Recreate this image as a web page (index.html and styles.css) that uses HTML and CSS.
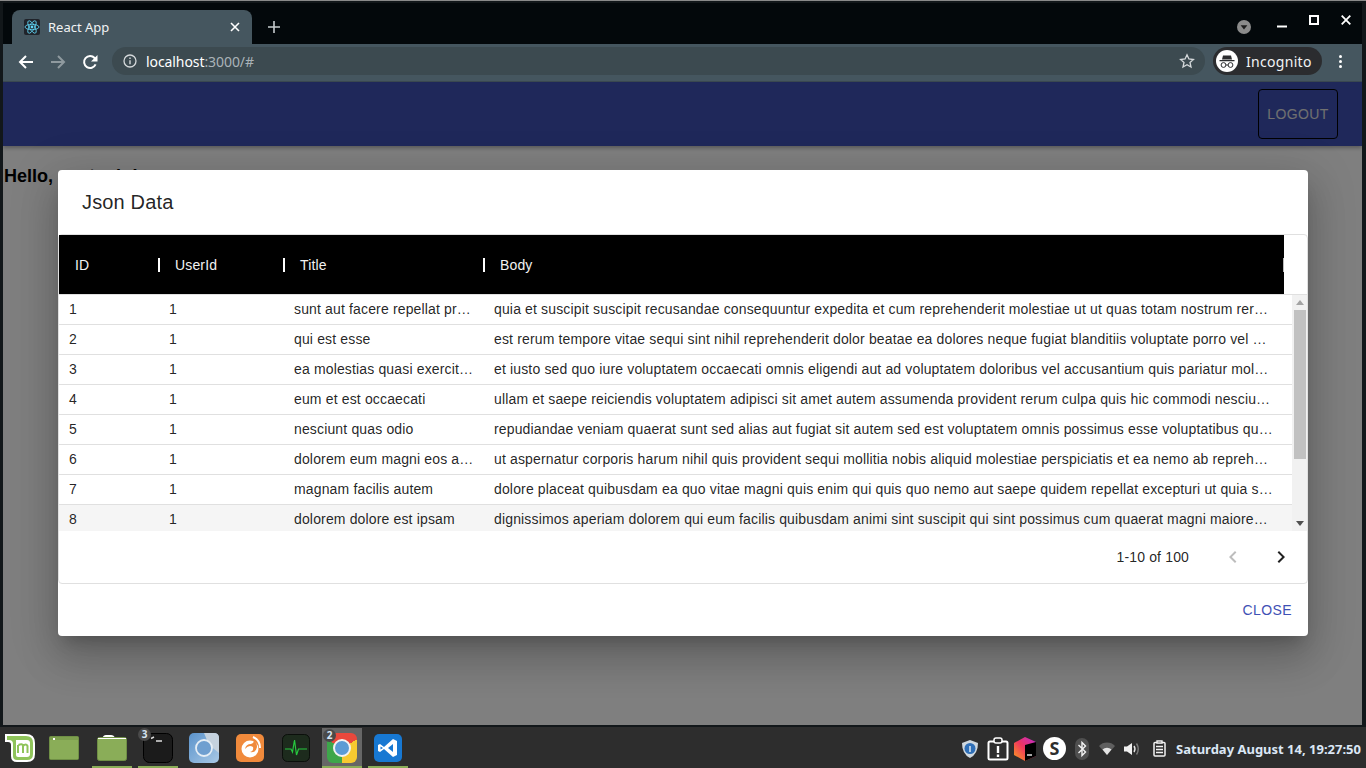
FILE: index.html
```html
<!DOCTYPE html>
<html lang="en">
<head>
    <meta charset="UTF-8">
    <title>React App</title>
    <link rel="stylesheet" href="styles.css">
</head>
<body>
    <div class="window">
        <!-- tab strip -->
        <div class="tabstrip">
            <div class="tab">
                <svg class="favicon" width="16" height="16" viewBox="0 0 16 16">
                    <rect width="16" height="16" rx="2" fill="#20232a"/>
                    <g fill="none" stroke="#61dafb" stroke-width="0.8">
                        <ellipse cx="8" cy="8" rx="7" ry="2.7"/>
                        <ellipse cx="8" cy="8" rx="7" ry="2.7" transform="rotate(60 8 8)"/>
                        <ellipse cx="8" cy="8" rx="7" ry="2.7" transform="rotate(120 8 8)"/>
                    </g>
                    <circle cx="8" cy="8" r="1.4" fill="#61dafb"/>
                </svg>
                <span class="tab-title">React App</span>
                <svg class="tab-close" width="10" height="10" viewBox="0 0 10 10"><path d="M1 1l8 8M9 1l-8 8" stroke="#fff" stroke-width="1.6"/></svg>
            </div>
            <svg class="new-tab" width="12" height="12" viewBox="0 0 12 12"><path d="M6 0v12M0 6h12" stroke="#c6cbce" stroke-width="1.6"/></svg>
            <div class="win-controls">
                <svg class="tab-search" width="14" height="14" viewBox="0 0 14 14"><circle cx="7" cy="7" r="7" fill="#8b8b8b"/><path d="M3.6 5.2h6.8L7 9.6z" fill="#1c1c1c"/></svg>
                <svg class="win-min" width="10" height="10" viewBox="0 0 10 10"><path d="M0 8.5h10" stroke="#fff" stroke-width="2"/></svg>
                <svg class="win-max" width="10" height="10" viewBox="0 0 10 10"><rect x="1" y="1" width="8" height="8" fill="none" stroke="#fff" stroke-width="2"/></svg>
                <svg class="win-close" width="10" height="10" viewBox="0 0 10 10"><path d="M.7.7l8.6 8.6M9.3.7L.7 9.3" stroke="#fff" stroke-width="1.8"/></svg>
            </div>
        </div>

        <!-- address bar -->
        <div class="toolbar">
            <svg class="nav-btn" width="16" height="16" viewBox="0 0 16 16"><path d="M15 8H2M8 2L2 8l6 6" fill="none" stroke="#fff" stroke-width="2"/></svg>
            <svg class="nav-btn" width="16" height="16" viewBox="0 0 16 16"><path d="M1 8h13M8 2l6 6-6 6" fill="none" stroke="#8f9a9f" stroke-width="2"/></svg>
            <svg class="nav-btn" width="16" height="16" viewBox="0 0 16 16"><path d="M13.6 10.4A6 6 0 1 1 12.6 4L14.500 6" fill="none" stroke="#fff" stroke-width="2"/><path d="M15.500 1v6.500H9z" fill="#fff"/></svg>
            <div class="omnibox">
                <svg width="14" height="14" viewBox="0 0 14 14"><circle cx="7" cy="7" r="6" fill="none" stroke="#d5d9db" stroke-width="1.300"/><path d="M7 6.200v4M7 3.600v1.400" stroke="#d5d9db" stroke-width="1.400"/></svg>
                <span class="url"><span class="url-host">localhost</span>:3000/#</span>
                <svg class="star" width="16" height="16" viewBox="0 0 16 16"><path d="M8 1.800l1.900 4.200 4.500.5-3.400 3 1 4.500L8 11.700 4 14l1-4.500-3.400-3 4.500-.5z" fill="none" stroke="#d5d9db" stroke-width="1.300"/></svg>
            </div>
            <div class="incognito">
                <svg width="22" height="22" viewBox="0 0 22 22">
                    <circle cx="11" cy="11" r="11" fill="#fff"/>
                    <path d="M7 5.500h8l1 4H6zM3.500 10h15v1.200h-15z" fill="#2b2c2f"/>
                    <g fill="none" stroke="#2b2c2f" stroke-width="1"><circle cx="7.500" cy="15" r="2.400"/><circle cx="14.500" cy="15" r="2.400"/><path d="M10 15h2"/></g>
                </svg>
                <span>Incognito</span>
            </div>
            <div class="menu-dots"><i></i><i></i><i></i></div>
        </div>

        <!-- the page itself -->
        <div class="page">
            <header class="appbar">
                <button class="logout">LOGOUT</button>
            </header>
            <p class="hello">Hello, santosh !</p>

            <div class="backdrop"></div>

            <div class="dialog">
                <h2 class="dialog-title">Json Data</h2>
                <div class="grid">
                    <div class="grid-head">
                        <div class="head-cols">
                            <div class="head-cell col-id">ID</div>
                            <div class="head-cell col-user">UserId</div>
                            <div class="head-cell col-title">Title</div>
                            <div class="head-cell col-body">Body</div>
                        </div>
                    </div>
                    <div class="grid-main">
                        <div class="rows">
                            <div class="row">
                                <div class="cell col-id">1</div><div class="cell col-user">1</div>
                                <div class="cell col-title">sunt aut facere repellat provident occaecati excepturi optio reprehenderit</div>
                                <div class="cell col-body">quia et suscipit suscipit recusandae consequuntur expedita et cum reprehenderit molestiae ut ut quas totam nostrum rerum est autem sunt rem eveniet architecto</div>
                            </div>
                            <div class="row">
                                <div class="cell col-id">2</div><div class="cell col-user">1</div>
                                <div class="cell col-title">qui est esse</div>
                                <div class="cell col-body">est rerum tempore vitae sequi sint nihil reprehenderit dolor beatae ea dolores neque fugiat blanditiis voluptate porro vel nihil molestiae ut reiciendis qui aperiam non debitis possimus qui neque nisi nulla</div>
                            </div>
                            <div class="row">
                                <div class="cell col-id">3</div><div class="cell col-user">1</div>
                                <div class="cell col-title">ea molestias quasi exercitationem repellat qui ipsa sit aut</div>
                                <div class="cell col-body">et iusto sed quo iure voluptatem occaecati omnis eligendi aut ad voluptatem doloribus vel accusantium quis pariatur molestiae porro eius odio et labore et velit aut</div>
                            </div>
                            <div class="row">
                                <div class="cell col-id">4</div><div class="cell col-user">1</div>
                                <div class="cell col-title">eum et est occaecati</div>
                                <div class="cell col-body">ullam et saepe reiciendis voluptatem adipisci sit amet autem assumenda provident rerum culpa quis hic commodi nesciunt rem tenetur doloremque ipsam iure quis sunt voluptatem rerum illo velit</div>
                            </div>
                            <div class="row">
                                <div class="cell col-id">5</div><div class="cell col-user">1</div>
                                <div class="cell col-title">nesciunt quas odio</div>
                                <div class="cell col-body">repudiandae veniam quaerat sunt sed alias aut fugiat sit autem sed est voluptatem omnis possimus esse voluptatibus quis est aut tenetur dolor neque</div>
                            </div>
                            <div class="row">
                                <div class="cell col-id">6</div><div class="cell col-user">1</div>
                                <div class="cell col-title">dolorem eum magni eos aperiam quia</div>
                                <div class="cell col-body">ut aspernatur corporis harum nihil quis provident sequi mollitia nobis aliquid molestiae perspiciatis et ea nemo ab reprehenderit accusantium quas voluptate dolores velit et doloremque molestiae</div>
                            </div>
                            <div class="row">
                                <div class="cell col-id">7</div><div class="cell col-user">1</div>
                                <div class="cell col-title">magnam facilis autem</div>
                                <div class="cell col-body">dolore placeat quibusdam ea quo vitae magni quis enim qui quis quo nemo aut saepe quidem repellat excepturi ut quia sunt ut sequi eos ea sed quas</div>
                            </div>
                            <div class="row row-hover">
                                <div class="cell col-id">8</div><div class="cell col-user">1</div>
                                <div class="cell col-title">dolorem dolore est ipsam</div>
                                <div class="cell col-body">dignissimos aperiam dolorem qui eum facilis quibusdam animi sint suscipit qui sint possimus cum quaerat magni maiores excepturi ipsam ut commodi dolor voluptatum modi aut vitae</div>
                            </div>
                        </div>
                        <div class="scrollbar">
                            <div class="arrow-up"></div>
                            <div class="thumb"></div>
                            <div class="arrow-down"></div>
                        </div>
                    </div>
                    <div class="grid-foot">
                        <span class="page-count">1-10 of 100</span>
                        <svg class="page-prev" width="24" height="24" viewBox="0 0 24 24"><path d="M15.410 7.410L14 6l-6 6 6 6 1.410-1.410L10.830 12z" fill="#bdbdbd"/></svg>
                        <svg class="page-next" width="24" height="24" viewBox="0 0 24 24"><path d="M10 6L8.590 7.410 13.170 12l-4.580 4.590L10 18l6-6z" fill="#212121"/></svg>
                    </div>
                </div>
                <div class="dialog-actions">
                    <button class="close-btn">CLOSE</button>
                </div>
            </div>
        </div>
    </div>

    <!-- mint panel -->
    <div class="taskbar">
        <svg class="mint" width="32" height="30" viewBox="0 0 32 30">
            <path d="M1 1h21q9 0 9 9v11q0 8-8 8H13q-6 0-6-6V12q0-3-3-3H1z" fill="#fff"/>
            <path d="M3 3h19q7 0 7 7v11q0 6-6 6H13q-4 0-4-4V11q0-4-4-4H3z" fill="#8fc45a"/>
            <path d="M12 7h11q3 0 3 3v11q0 3-3 3h-9q-2 0-2-2z" fill="#fff"/>
            <path d="M14 20v-8M14.500 12q4-2 4.500 1v7M19 13q3-3 4.500 0v7" fill="none" stroke="#8fc45a" stroke-width="2"/>
        </svg>
        <div class="launcher">
            <div class="launch launch-folder">
                <svg width="30" height="24" viewBox="0 0 30 24"><rect x=".5" y=".5" width="29" height="23" rx="1" fill="#8aad58" stroke="#6f8f45"/><rect x="1" y="1" width="28" height="3" fill="#7d9f4e"/><rect x="4" y="2" width="2" height="2" fill="#fff"/></svg>
            </div>
            <div class="launch launch-folder running">
                <svg width="30" height="26" viewBox="0 0 30 26"><path d="M5 4q1-4 4-4h5q3 0 4 3z" fill="#fff"/><rect x=".5" y="2.500" width="29" height="23" rx="2" fill="#8aad58" stroke="#6f8f45"/><path d="M1 3h28v1H1z" fill="#fff"/></svg>
            </div>
            <div class="launch running">
                <svg width="30" height="30" viewBox="0 0 30 30"><rect x=".5" y=".5" width="29" height="29" rx="6" fill="#1b1b1b" stroke="#000"/><path d="M8 5.500l3-1.500" stroke="#ddd" stroke-width="1.400"/><path d="M13 8h6" stroke="#eee" stroke-width="1.400"/></svg>
                <span class="badge">3</span>
            </div>
            <div class="launch">
                <svg width="30" height="30" viewBox="0 0 30 30"><defs><linearGradient id="cr" x1="0" y1="0" x2="1" y2="1"><stop offset="0" stop-color="#5b93cb"/><stop offset="1" stop-color="#a9c9e6"/></linearGradient></defs><rect width="30" height="30" rx="5" fill="url(#cr)"/><path d="M15 0h10q5 0 5 5v15L20 12z" fill="#c5d2de"/><circle cx="15" cy="15" r="8" fill="#6f9fd0" stroke="#e6eef5" stroke-width="1.800"/></svg>
            </div>
            <div class="launch">
                <svg width="28" height="28" viewBox="0 0 28 28"><rect width="28" height="28" rx="5" fill="#f08a3c"/><circle cx="14" cy="15" r="8.500" fill="#fff"/><path d="M9 15q4-5 8-2 1 4-3 5 6 1 7-5 0-5-4-7 2 3-2 4-5 0-6 5z" fill="#f08a3c"/><path d="M17 3q7 3 7 11" fill="none" stroke="#fff" stroke-width="2"/></svg>
            </div>
            <div class="launch">
                <svg width="28" height="28" viewBox="0 0 28 28"><rect x=".5" y=".5" width="27" height="27" rx="5" fill="#1d2b1d" stroke="#0b0f0b"/><path d="M3 15h6l1.500 3L12.500 6l2 15 2-6H25" fill="none" stroke="#27c93f" stroke-width="1.200"/></svg>
            </div>
            <div class="launch launch-active running">
                <div class="chrome-icon"><div class="chrome-dot"></div></div>
                <span class="badge">2</span>
            </div>
            <div class="launch running">
                <svg width="28" height="28" viewBox="0 0 28 28"><rect width="28" height="28" rx="5" fill="#1778d2"/><path d="M19 5l-9 8-4-3-2 1v6l2 1 4-3 9 8 4-2V7zM19 10v8l-5-4zM6.500 12.500L9 14l-2.500 1.500z" fill="#fff" fill-rule="evenodd"/></svg>
            </div>
        </div>
        <div class="tray">
            <svg class="tray-shield" width="20" height="20" viewBox="0 0 20 20"><path d="M10 1l8 3q0 11-8 15Q2 15 2 4z" fill="#cfd8df"/><circle cx="10" cy="9.500" r="5.500" fill="#2f6fb7"/><path d="M10 7v6" stroke="#dbe7f2" stroke-width="1.500"/></svg>
            <svg class="tray-note" width="22" height="24" viewBox="0 0 22 24"><rect x="1.500" y="4.500" width="19" height="18" rx="1.500" fill="none" stroke="#fff" stroke-width="2"/><rect x="7" y="1" width="8" height="5" rx="2" fill="#2d2d2d" stroke="#fff" stroke-width="1.500"/><path d="M11 9v7M11 17.500v2.500" stroke="#fff" stroke-width="2.400"/></svg>
            <svg class="tray-box" width="23" height="24" viewBox="0 0 23 24"><defs><linearGradient id="jb" x1="0" y1="1" x2="1" y2="0"><stop offset="0" stop-color="#f9a11b"/><stop offset=".5" stop-color="#f0355f"/><stop offset="1" stop-color="#c02bd6"/></linearGradient></defs><path d="M11 0l11 5v14l-11 5L0 18V6z" fill="url(#jb)"/><path d="M11 8l11-3v14l-11 5z" fill="#000"/><path d="M13 18h5" stroke="#fff" stroke-width="1.300"/></svg>
            <div class="tray-skype">S</div>
            <svg class="tray-bt" width="14" height="22" viewBox="0 0 14 22"><rect width="14" height="22" rx="7" fill="#4f4f4f"/><path d="M3.500 7l7 7-3.500 3.500v-13L10.500 8l-7 7" fill="none" stroke="#f2f2f2" stroke-width="1.400"/></svg>
            <svg class="tray-wifi" width="16" height="13" viewBox="0 0 16 13"><path d="M0 4a11 11 0 0 1 16 0L8 13z" fill="#5f5f5f"/><path d="M3.500 7.500a6.500 6.500 0 0 1 9 0L8 13z" fill="#e4e4e4"/></svg>
            <svg class="tray-vol" width="16" height="16" viewBox="0 0 16 16"><path d="M0 5.500h3L8 2v12L3 10.500H0z" fill="#f0f0f0"/><path d="M10 5q2 3 0 6" fill="none" stroke="#e4e4e4" stroke-width="1.400"/><path d="M12.500 2.500q3.500 5.500 0 11" fill="none" stroke="#7a7a7a" stroke-width="1.400"/></svg>
            <svg class="tray-list" width="13" height="17" viewBox="0 0 13 17"><rect x="1" y="2.500" width="11" height="13.500" rx="1" fill="none" stroke="#f2f2f2" stroke-width="1.500"/><path d="M4 1h5v2H4zM3 6.500h7M3 9.500h7M3 12.500h7" stroke="#f2f2f2" stroke-width="1.400"/></svg>
            <span class="clock">Saturday August 14, 19:27:50</span>
        </div>
    </div>
</body>
</html>
```

FILE: styles.css
```css
* {
    box-sizing: border-box;
}

html, body {
    margin: 0;
    height: 768px;
    overflow: hidden;
}

body {
    display: flex;
    flex-direction: column;
    background: #2d2d2d;
    font-family: "Liberation Sans", Arial, sans-serif;
}

/* chrome window */
.window {
    height: 727px;
    display: flex;
    flex-direction: column;
    background: #12171a;
    border-top: 1px solid #8a8a8a;
    padding: 2px 4px 2px 3px;
}

.tabstrip {
    height: 41px;
    flex-shrink: 0;
    display: flex;
    align-items: flex-end;
    background: #03080b;
    padding-left: 9px;
}

.tab {
    width: 240px;
    height: 34px;
    display: flex;
    align-items: center;
    background: #45565f;
    border-radius: 8px 8px 0 0;
    padding: 0 12px;
    color: #fff;
}

.favicon {
    flex-shrink: 0;
}

.tab-title {
    flex: 1;
    margin-left: 8px;
    font: 13px "Noto Sans", sans-serif;
    color: #f1f3f4;
}

.new-tab {
    margin: 0 0 11px 16px;
}

.win-controls {
    margin-left: auto;
    display: flex;
    align-items: center;
    align-self: flex-start;
    height: 36px;
    padding-right: 11px;
}

.tab-search {
    margin: 12px 26px 0 0;
}

.win-min {
    margin-right: 22px;
    margin-top: 4px;
}

.win-max {
    margin-right: 22px;
    margin-top: -3px;
}

.win-close {
    margin-top: -3px;
}

.toolbar {
    height: 38px;
    flex-shrink: 0;
    display: flex;
    align-items: center;
    background: #45565f;
    border-bottom: 1px solid #3a4850;
    padding: 0 11px 3px 15px;
}

.nav-btn {
    margin-right: 16px;
    margin-top: 1px;
}

.omnibox {
    width: 1093px;
    height: 28px;
    margin-left: -2px;
    display: flex;
    align-items: center;
    background: #3c4a50;
    border-radius: 14px;
    padding: 0 10px 0 11px;
}

.url {
    flex: 1;
    margin-left: 9px;
    font: 14px "Noto Sans", sans-serif;
    letter-spacing: -0.08px;
    color: #aab3b8;
}

.url-host {
    color: #fff;
}

.incognito {
    width: 109px;
    height: 28px;
    margin-left: 8px;
    display: flex;
    align-items: center;
    gap: 8px;
    background: #2b2c2f;
    border-radius: 14px;
    padding-left: 3px;
    font: 14px "Noto Sans", sans-serif;
    letter-spacing: 0.3px;
    color: #f1f3f4;
}

.menu-dots {
    margin-left: 17px;
    display: flex;
    flex-direction: column;
    gap: 2px;
}

.menu-dots i {
    display: block;
    width: 3px;
    height: 3px;
    border-radius: 50%;
    background: #fff;
}

/* page under the dialog */
.page {
    position: relative;
    flex: 1;
    background: #fff;
    overflow: hidden;
}

.appbar {
    height: 64px;
    display: flex;
    align-items: center;
    justify-content: flex-end;
    background: #3f51b5;
    box-shadow: 0 2px 4px rgba(0, 0, 0, 0.3);
    padding-right: 24px;
}

.logout {
    width: 80px;
    height: 50px;
    background: none;
    border: 1px solid #000;
    border-radius: 4px;
    font: 14px "Liberation Sans", sans-serif;
    letter-spacing: 0.4px;
    color: #e0e0e0;
}

.hello {
    margin: 20px 0 0 1px;
    font-size: 18px;
    font-weight: bold;
    color: #000;
}

.backdrop {
    position: absolute;
    inset: 0;
    background: rgba(0, 0, 0, 0.5);
}

.dialog {
    position: absolute;
    left: 55px;
    top: 88px;
    width: 1250px;
    height: 466px;
    display: flex;
    flex-direction: column;
    background: #fff;
    border-radius: 4px;
    box-shadow: 0 11px 15px -7px rgba(0, 0, 0, 0.2), 0 24px 38px 3px rgba(0, 0, 0, 0.14), 0 9px 46px 8px rgba(0, 0, 0, 0.12);
}

.dialog-title {
    height: 64px;
    margin: 0;
    padding: 0 24px;
    font-size: 20px;
    font-weight: normal;
    letter-spacing: 0.0075em;
    line-height: 64px;
    color: rgba(0, 0, 0, 0.87);
}

/* data grid */
.grid {
    height: 350px;
    display: flex;
    flex-direction: column;
    border: 1px solid #e0e0e0;
    border-radius: 4px;
    letter-spacing: 0.01071em;
    font-size: 14px;
    color: rgba(0, 0, 0, 0.87);
}

.grid-head {
    height: 60px;
    flex-shrink: 0;
    border-bottom: 1px solid #e0e0e0;
}

.head-cols {
    width: 1225px;
    height: 59px;
    display: flex;
    background: #000;
}

.head-cell {
    position: relative;
    padding-left: 16px;
    line-height: 61px;
    color: #f2f2f2;
}

.head-cell::after {
    content: "";
    position: absolute;
    right: -1px;
    top: 23px;
    width: 2px;
    height: 14px;
    background: #fff;
}

.head-cell.col-body::after {
    right: 0;
    width: 1px;
    background: #bbb;
}

.col-id {
    width: 100px;
    flex-shrink: 0;
}

.col-user {
    width: 125px;
    flex-shrink: 0;
}

.col-title {
    width: 200px;
    flex-shrink: 0;
}

.col-body {
    width: 800px;
    flex-shrink: 0;
}

.grid-main {
    height: 236px;
    flex-shrink: 0;
    display: flex;
    overflow: hidden;
}

.rows {
    width: 1233px;
    flex-shrink: 0;
}

.row {
    height: 30px;
    display: flex;
    border-bottom: 1px solid #e0e0e0;
}

.row-hover {
    background: #f5f5f5;
}

.cell {
    padding: 0 10px;
    line-height: 29px;
    white-space: nowrap;
    overflow: hidden;
    text-overflow: ellipsis;
}

.scrollbar {
    flex: 1;
    display: flex;
    flex-direction: column;
    align-items: center;
    background: #f1f1f1;
    padding-top: 5px;
}

.arrow-up {
    width: 0;
    height: 0;
    border: 4px solid transparent;
    border-top: 0;
    border-bottom: 5px solid #a3a3a3;
}

.thumb {
    width: 12px;
    height: 149px;
    margin-top: 5px;
    background: #c1c1c1;
}

.arrow-down {
    width: 0;
    height: 0;
    margin-top: auto;
    margin-bottom: 5px;
    border: 4px solid transparent;
    border-bottom: 0;
    border-top: 5px solid #505050;
}

.grid-foot {
    flex: 1;
    display: flex;
    align-items: center;
    justify-content: flex-end;
    padding-right: 14px;
}

.page-count {
    margin-right: 32px;
}

.page-prev {
    margin-right: 24px;
}

.dialog-actions {
    flex: 1;
    display: flex;
    align-items: center;
    justify-content: flex-end;
    padding: 0 16px 0 0;
}

.close-btn {
    padding: 0;
    background: none;
    border: 0;
    font: 14px "Liberation Sans", sans-serif;
    letter-spacing: 0.4px;
    color: #3f51b5;
}

/* panel */
.taskbar {
    flex: 1;
    display: flex;
    align-items: stretch;
    background: #2d2d2d;
    padding-left: 4px;
}

.mint {
    align-self: center;
}

.launcher {
    display: flex;
    gap: 6px;
    margin-left: 8px;
}

.launch {
    position: relative;
    width: 40px;
    display: flex;
    align-items: center;
    justify-content: center;
}

.launch-folder:first-child {
    margin-right: 2px;
}

.running::after {
    content: "";
    position: absolute;
    left: 0;
    right: 0;
    bottom: 0;
    height: 2px;
    background: #8aad58;
}

.launch-active {
    background: #666;
    margin-top: 1px;
}

.chrome-icon {
    width: 30px;
    height: 30px;
    display: flex;
    align-items: center;
    justify-content: center;
    border-radius: 6px;
    background: conic-gradient(from 300deg, #e9483c 0 120deg, #f7c930 120deg 240deg, #3da64a 240deg 360deg);
}

.chrome-dot {
    width: 18px;
    height: 18px;
    border-radius: 50%;
    background: #5b9bd5;
    border: 2px solid #f2f2f2;
}

.badge {
    position: absolute;
    left: 0;
    top: 1px;
    width: 13px;
    height: 13px;
    border-radius: 50%;
    background: #4a4a4a;
    font: bold 10px/13px "Noto Sans", sans-serif;
    text-align: center;
    color: #d6e4f2;
}

.launch-active .badge {
    left: 1px;
}

.tray {
    margin-left: auto;
    display: flex;
    align-items: center;
    padding-right: 5px;
    padding-top: 2px;
}

.tray-shield {
    margin-right: 7px;
}

.tray-note {
    margin-right: 5px;
}

.tray-box {
    margin-right: 6px;
}

.tray-skype {
    width: 23px;
    height: 23px;
    margin-right: 9px;
    border-radius: 50%;
    background: #fff;
    font: bold 18px/23px "Noto Sans", sans-serif;
    text-align: center;
    color: #2d2d2d;
}

.tray-bt {
    margin-right: 10px;
}

.tray-wifi {
    margin-right: 9px;
}

.tray-vol {
    margin-right: 13px;
}

.tray-list {
    margin-right: 10px;
}

.clock {
    font: bold 13px "Noto Sans", sans-serif;
    color: #dbe7f5;
    white-space: nowrap;
}
```
